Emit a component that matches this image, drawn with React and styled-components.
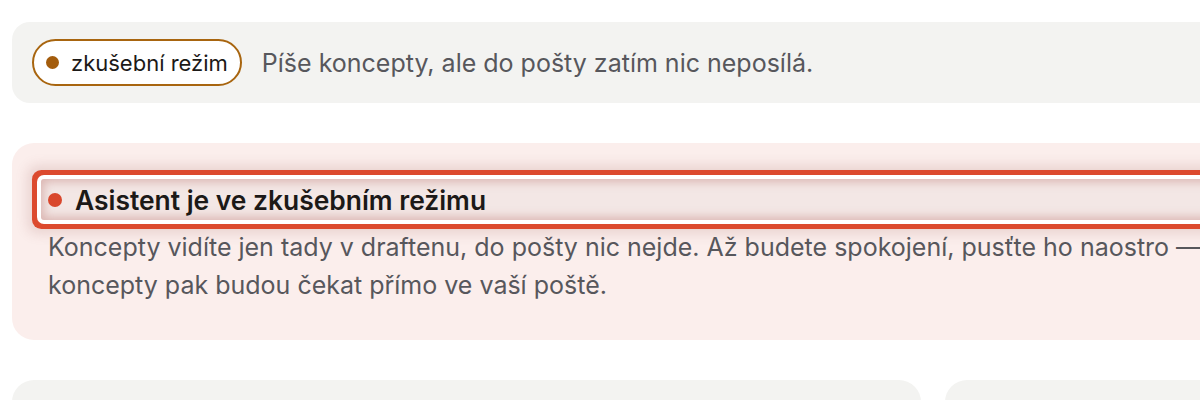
import styled, { createGlobalStyle } from "styled-components";

const GlobalStyle = createGlobalStyle`
  body {
    margin: 0;
    background: #ffffff;
    font-family: Inter, "Noto Sans", sans-serif;
    color: #1c1917;
    overflow: hidden;
  }
`;

const Page = styled.main`
  width: 1388px;
  padding: 22px 0 0 12px;
  display: flex;
  flex-direction: column;
  gap: 40px;
`;

const ModeBar = styled.section`
  display: flex;
  align-items: center;
  gap: 20px;
  padding: 17px 20px;
  background: #f3f3f1;
  border-radius: 18px;
`;

const Badge = styled.span`
  display: inline-flex;
  align-items: center;
  gap: 12px;
  height: 47px;
  box-sizing: border-box;
  padding: 0 12px 0 12px;
  border: 2px solid ${(p) => p.$tone};
  border-radius: 999px;
  background: #fff;
  font-size: 22px;
  color: #1c1917;
`;

const Dot = styled.span`
  width: ${(p) => p.$size}px;
  height: ${(p) => p.$size}px;
  border-radius: 50%;
  background: ${(p) => p.$tone};
  flex: none;
`;

const ModeText = styled.span`
  font-size: 25px;
  color: #57575c;
`;

const Notice = styled.section`
  background: #fbeeec;
  border-radius: 22px;
  padding: 36px 36px 36px;
`;

const NoticeTitle = styled.h3`
  margin: 0 -7px;
  height: 41px;
  display: flex;
  align-items: center;
  gap: 13px;
  padding: 0 7px;
  border-radius: 3px;
  background: #f3e7e5;
  font-size: 26.4px;
  font-weight: 600;
  color: #1c1917;
  box-shadow: inset 0 0 10px 3px rgba(204, 150, 145, 0.6),
    0 0 0 4px #ffffff, 0 0 0 9px #dc4a2e,
    0 0 12px 14px rgba(160, 95, 90, 0.18);
`;

const NoticeText = styled.p`
  margin: 8px 0 0;
  max-width: 1180px;
  font-size: 25px;
  line-height: 38px;
  color: #57575c;
`;

const Grid = styled.div`
  display: grid;
  grid-template-columns: 2fr 1fr;
  gap: 24px;
`;

const Card = styled.div`
  min-height: 200px;
  background: #f3f3f1;
  border-radius: 22px;
`;

export default function App() {
  return (
    <>
      <GlobalStyle />
      <Page>
        <ModeBar>
          <Badge $tone="#a8650f">
            <Dot $size={13} $tone="#a35c0c" />
            zkušební režim
          </Badge>
          <ModeText>Píše koncepty, ale do pošty zatím nic neposílá.</ModeText>
        </ModeBar>
        <Notice>
          <NoticeTitle>
            <Dot $size={14} $tone="#d9472c" />
            Asistent je ve zkušebním režimu
          </NoticeTitle>
          <NoticeText>
            Koncepty vidíte jen tady v draftenu, do pošty nic nejde. Až budete
            spokojení, pusťte ho naostro — koncepty pak budou čekat přímo ve
            vaší poště.
          </NoticeText>
        </Notice>
        <Grid>
          <Card />
          <Card />
        </Grid>
      </Page>
    </>
  );
}
